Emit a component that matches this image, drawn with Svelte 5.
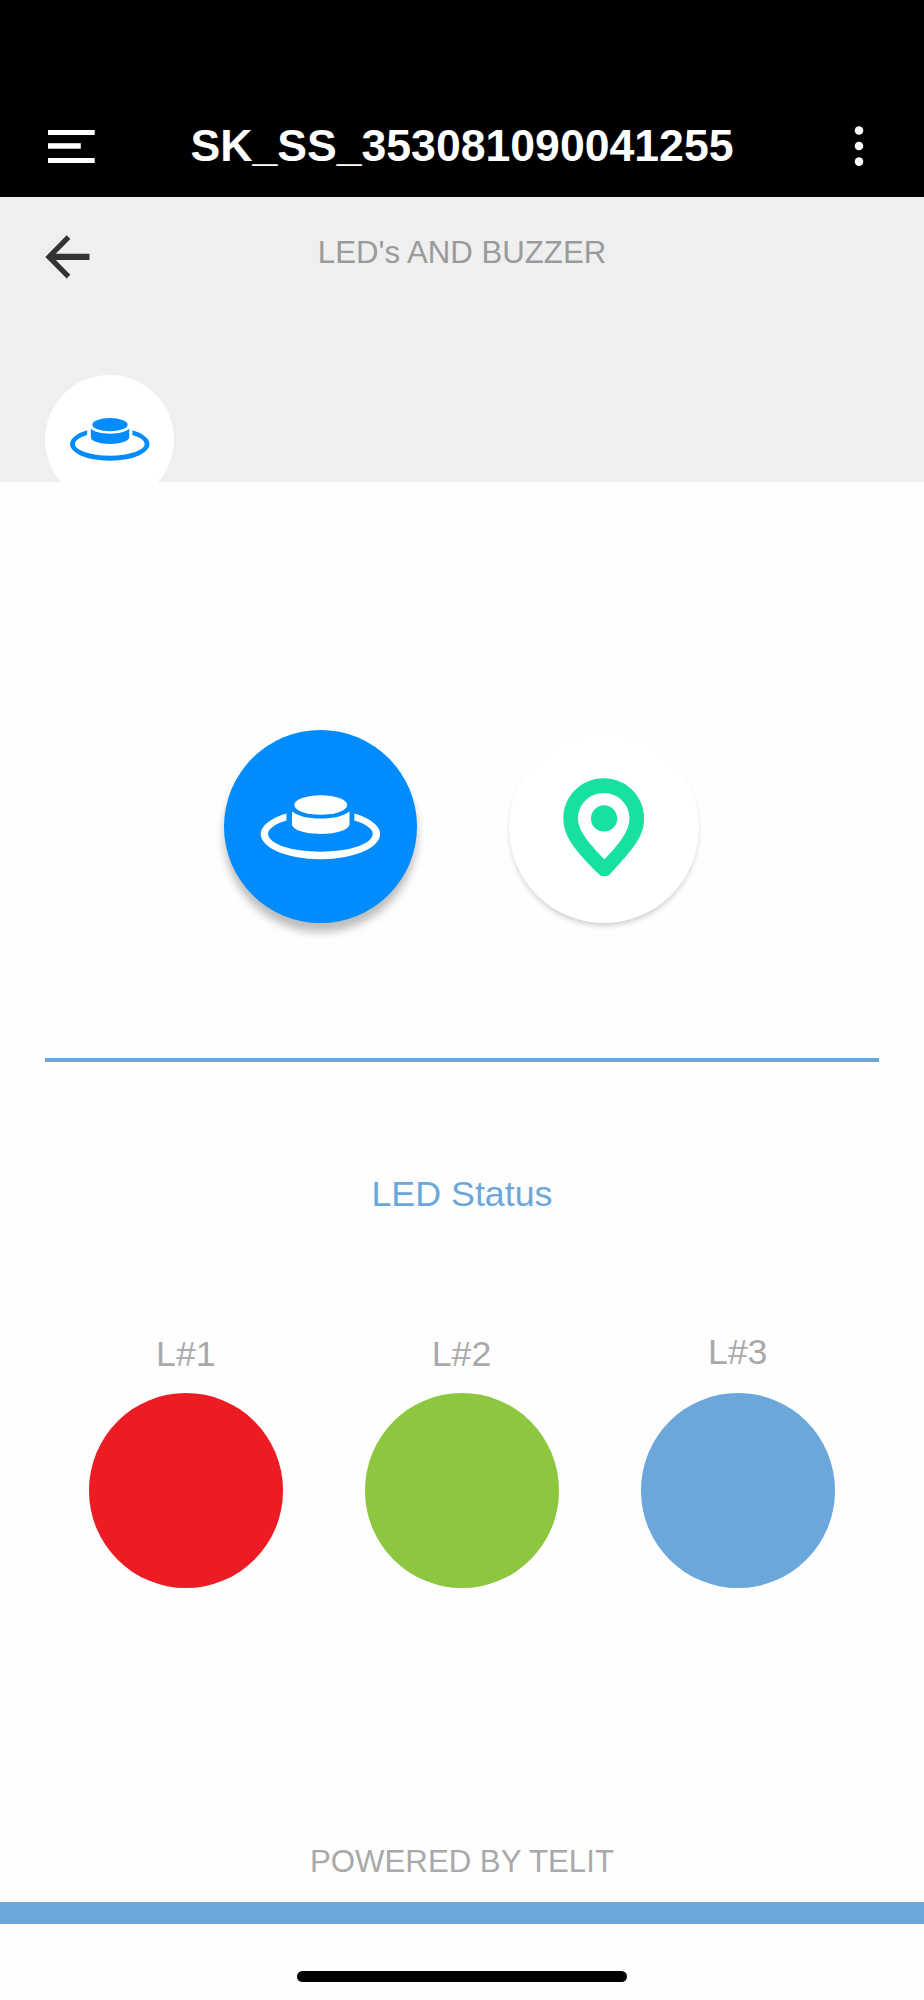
<script lang="ts">
    let deviceName: string = "SK_SS_353081090041255";

    const leds = [
        { label: "L#1", color: "#ed1c24" },
        { label: "L#2", color: "#8dc63f" },
        { label: "L#3", color: "#6ca7db", raised: true },
    ];
</script>

{#snippet buzzer()}
    <svg class="buzzer" viewBox="152 238 359 194" fill="currentColor">
        <path
            d="M228.5 293.5A179.5 75.5 0 1 0 432.5 293.5V315A157.5 53 0 1 1 228.5 315Z"
        />
        <ellipse cx="331.5" cy="268" rx="79.5" ry="29.5" />
        <path
            d="M245 287C260 301 292 309 331.5 309S403 301 418 287V326C418 342 380 355 331.5 355S245 342 245 326Z"
        />
    </svg>
{/snippet}

<div class="app">
    <header>
        <svg class="menu" viewBox="0 0 47 33" fill="#fff">
            <rect width="46.7" height="5" />
            <rect y="13.2" width="32.8" height="5.5" />
            <rect y="28" width="46.7" height="5" />
        </svg>
        <h1>{deviceName}</h1>
        <svg class="more" viewBox="0 0 10 40" fill="#fff">
            <circle cx="5" cy="4.5" r="4.3" />
            <circle cx="5" cy="20" r="4.3" />
            <circle cx="5" cy="35.6" r="4.3" />
        </svg>
    </header>

    <section class="banner">
        <div class="nav">
            <svg class="back" viewBox="0 0 45 44" fill="none" stroke="#333" stroke-width="5.2">
                <path d="M23.5 2.2L4 21.9L23.5 41.6" />
                <path d="M4 21.9H44.5" stroke-width="6.2" />
            </svg>
            <h2>LED's AND BUZZER</h2>
        </div>
        <div class="badge">{@render buzzer()}</div>
    </section>

    <main>
        <div class="actions">
            <div class="action active">{@render buzzer()}</div>
            <div class="action locate">
                <svg class="pin" viewBox="219 188 245 296" fill="#18e0a0">
                    <path
                        fill-rule="evenodd"
                        d="M341.5 189C274 189 220 243 220 310C220 340 231 368 255 399C275 425 308 460 331 480Q335 483 344 483Q353 483 357 480C376 460 408 425 428 399C452 368 463 340 463 310C463 243 409 189 341.5 189ZM341.5 233C299 233 264 267 264 310C264 350 305 393 343.5 432C382 393 419 350 419 310C419 267 384 233 341.5 233Z"
                    />
                    <circle cx="342.5" cy="309.5" r="39.5" />
                </svg>
            </div>
        </div>

        <h3>LED Status</h3>

        <div class="leds">
            {#each leds as led}
                <div class="led">
                    <span class="label" class:raised={led.raised}>{led.label}</span>
                    <div class="light" style="background-color: {led.color};"></div>
                </div>
            {/each}
        </div>
    </main>

    <footer>
        <p>POWERED BY TELIT</p>
        <div class="stripe"></div>
        <div class="home"></div>
    </footer>
</div>

<style>
    :global(body) {
        background-color: #fefefe;
    }

    .app {
        display: flex;
        flex-direction: column;
        height: 2000px;
        overflow: hidden;
        font-family: "Liberation Sans", Arial, sans-serif;
    }

    h1,
    h2,
    h3,
    p {
        margin: 0;
        font-weight: 400;
        text-align: center;
        white-space: nowrap;
    }

    svg {
        display: block;
        flex: none;
        overflow: visible;
    }

    header {
        display: flex;
        align-items: center;
        justify-content: space-between;
        box-sizing: border-box;
        height: 196.5px;
        padding: 96px 60px 0 48px;
        background-color: #000;
    }

    h1 {
        padding-bottom: 1px;
        color: #fff;
        font-size: 44.6px;
        font-weight: 700;
        line-height: 50px;
    }

    .menu {
        width: 47px;
        height: 33px;
        margin-right: -25px;
    }

    .more {
        width: 10px;
        height: 40px;
    }

    .banner {
        display: flex;
        flex-direction: column;
        justify-content: space-between;
        height: 285.5px;
        overflow: hidden;
        background-color: #efefef;
    }

    .nav {
        display: grid;
        grid-template-columns: 45px 1fr 45px;
        padding: 36px 45px 0;
    }

    .back {
        width: 45px;
        height: 44px;
        margin-top: 2px;
    }

    h2 {
        color: #999b9c;
        font-size: 31.2px;
        line-height: 40px;
    }

    .badge {
        display: flex;
        justify-content: center;
        flex: none;
        box-sizing: border-box;
        width: 129px;
        height: 129px;
        margin: 0 0 -22px 45px;
        padding-top: 43px;
        border-radius: 50%;
        background-color: #fff;
        color: #008cff;
    }

    .badge .buzzer {
        width: 80px;
        height: 43px;
    }

    main {
        padding: 0 45px;
    }

    .actions {
        display: flex;
        justify-content: center;
        gap: 92px;
        height: 328px;
        padding: 248px 2px 0 0;
        border-bottom: 4.5px solid #6ca7db;
    }

    .action {
        display: flex;
        justify-content: center;
        box-sizing: border-box;
        border-radius: 50%;
    }

    .active {
        width: 193px;
        height: 193px;
        padding: 64.5px 0 0 1px;
        background-color: #008cff;
        box-shadow: 0 9px 9px rgba(0, 0, 0, 0.26);
        color: #fff;
    }

    .active .buzzer {
        width: 119.5px;
        height: 64.5px;
    }

    .locate {
        width: 190px;
        height: 190px;
        margin: 3px 0 0;
        padding-top: 45px;
        background-color: #fff;
        box-shadow: 0 4px 5px -1px rgba(0, 0, 0, 0.18);
    }

    .pin {
        width: 81.5px;
        height: 98.5px;
    }

    h3 {
        margin-top: 112px;
        color: #6ca7db;
        font-size: 35.8px;
        line-height: 40px;
    }

    .leds {
        display: flex;
        justify-content: center;
        gap: 81.4px;
        margin-top: 120px;
    }

    .led {
        display: flex;
        flex-direction: column;
        align-items: center;
    }

    .label {
        height: 59px;
        padding-right: 1px;
        color: #a9a9a9;
        font-size: 35.7px;
        line-height: 40px;
    }

    .raised {
        margin-top: -2px;
        padding: 0 0 2px;
    }

    .light {
        width: 194.3px;
        height: 194.5px;
        border-radius: 50%;
    }

    footer {
        display: flex;
        flex-direction: column;
        align-items: center;
        margin-top: auto;
    }

    p {
        color: #a9a9a9;
        font-size: 31.2px;
        line-height: 40px;
    }

    .stripe {
        width: 100%;
        height: 22.5px;
        margin-top: 20px;
        background-color: #6ca7db;
    }

    .home {
        width: 330px;
        height: 11px;
        margin: 47px 0 18px;
        border-radius: 6px;
        background-color: #000;
    }
</style>
